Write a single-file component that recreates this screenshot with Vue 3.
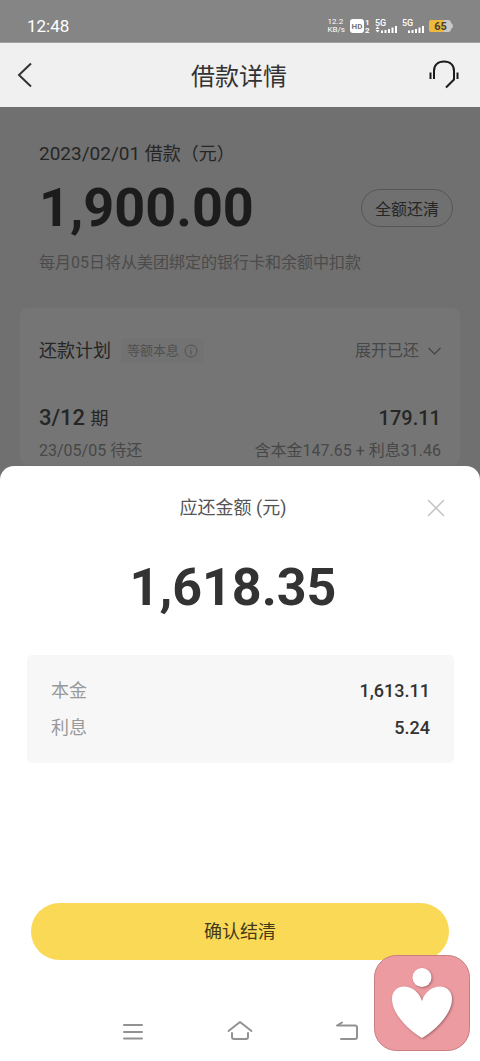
<script setup>
const details = [
  { label: '本金', value: '1,613.11' },
  { label: '利息', value: '5.24' },
]
</script>

<template>
  <div class="screen">
    <div class="status">
      <time class="clock">12:48</time>
      <div class="indicators">
        <div class="speed"><span>12.2</span><span>KB/s</span></div>
        <svg width="20" height="16" viewBox="0 0 20 16" aria-hidden="true">
          <rect x="0" y="1" width="14" height="14" rx="3" fill="#fff" />
          <text x="7" y="11" text-anchor="middle" font-size="8" font-weight="700" fill="#777">HD</text>
          <text x="15" y="7" font-size="8" font-weight="700" fill="#fff">1</text>
          <text x="15" y="15" font-size="8" font-weight="700" fill="#fff">2</text>
        </svg>
        <svg width="22" height="16" viewBox="0 0 22 16" aria-hidden="true">
          <text x="0" y="8" font-size="9" font-weight="500" fill="#fff">5G</text>
          <path d="M0.500 11 L2.500 8.500 L4.500 11Z M0.500 12 L2.500 14.500 L4.500 12Z" fill="#fff" />
          <path d="M7 15v-2.500M10.500 15v-3M14 15v-4M17.500 15v-5.500M21 15v-7" stroke="#fff" stroke-width="2" />
        </svg>
        <svg width="22" height="16" viewBox="0 0 22 16" aria-hidden="true">
          <text x="0" y="8" font-size="9" font-weight="500" fill="#fff">5G</text>
          <path d="M7 15v-2.500M10.500 15v-3M14 15v-4M17.500 15v-5.500M21 15v-7" stroke="#fff" stroke-width="2" />
        </svg>
        <svg width="25" height="14" viewBox="0 0 25 14" aria-hidden="true">
          <path d="M3 1H19Q22 1 22 4Q24 5 24 7Q24 9 22 10Q22 13 19 13H3Q0 13 0 10V4Q0 1 3 1Z" fill="#c9c9c9" />
          <path d="M3 1H15V13H3Q0 13 0 10V4Q0 1 3 1Z" fill="#eeb93c" />
          <text x="11.500" y="11" text-anchor="middle" font-size="11" font-weight="700" fill="#4b402b">65</text>
        </svg>
      </div>
    </div>

    <header class="header">
      <button class="icon-button" aria-label="返回">
        <svg width="16" height="26" viewBox="0 0 16 26"><path d="M14 1.500L2 13L14 24.500" fill="none" stroke="#333" stroke-width="2" /></svg>
      </button>
      <h1>借款详情</h1>
      <button class="icon-button" aria-label="客服">
        <svg width="30" height="30" viewBox="0 0 30 30" fill="none" stroke="#1c1c1c" stroke-width="2">
          <path d="M5 19V11C5 5 9 1.500 15 1.500S25 5 25 11V19.500L17 27.500" />
          <path d="M1.500 12.500V19M28.500 12.500V19" />
        </svg>
      </button>
    </header>

    <main class="loan">
      <section class="summary">
        <p class="date">2023/02/01 <span>借款（元）</span></p>
        <div class="amount-row">
          <strong class="amount">1,900.00</strong>
          <button class="payoff">全额还清</button>
        </div>
        <p class="note">每月05日将从美团绑定的银行卡和余额中扣款</p>
      </section>
      <section class="plan">
        <div class="plan-head">
          <h2>还款计划</h2>
          <span class="tag">等额本息
            <svg width="14" height="14" viewBox="0 0 14 14" fill="none" stroke="#505050"><circle cx="7" cy="7" r="6" /><path d="M7 6V10.500M7 3.500V4.500" /></svg>
          </span>
          <button class="expand">展开已还
            <svg width="14" height="10" viewBox="0 0 14 10" fill="none" stroke="#474747" stroke-width="1.300"><path d="M1.500 2L7.500 8L13.500 2" /></svg>
          </button>
        </div>
        <div class="term"><span>3/12 <small>期</small></span><span class="term-amount">179.11</span></div>
        <div class="term-note"><span>23/05/05 待还</span><span>含本金147.65 + 利息31.46</span></div>
      </section>
    </main>

    <section class="sheet" role="dialog" aria-labelledby="sheet-title">
      <div class="sheet-head">
        <h2 id="sheet-title">应还金额 (元)</h2>
        <button class="close" aria-label="关闭">
          <svg width="18" height="18" viewBox="0 0 18 18"><path d="M1 1L17 17M17 1L1 17" stroke="#c4c4c4" stroke-width="1.500" /></svg>
        </button>
      </div>
      <strong class="due">1,618.35</strong>
      <dl class="details">
        <div v-for="item in details" :key="item.label">
          <dt>{{ item.label }}</dt>
          <dd>{{ item.value }}</dd>
        </div>
      </dl>
      <button class="confirm">确认结清</button>
      <nav class="system-nav" aria-label="系统导航">
        <button aria-label="最近任务">
          <svg width="26" height="24" viewBox="0 0 26 24"><path d="M4 5H22M4 12H22M4 18.500H22" /></svg>
        </button>
        <button aria-label="主页">
          <svg width="26" height="24" viewBox="0 0 26 24"><path d="M1.500 11L13 2L24.500 11M5 13V17Q5 19 7 19H19Q21 19 21 17V13" /></svg>
        </button>
        <button aria-label="返回上一页">
          <svg width="26" height="24" viewBox="0 0 26 24"><path d="M8 2.500L3 5.500H21Q23 5.500 23 7.500V17Q23 19 21 19H7" /></svg>
        </button>
      </nav>
    </section>

    <svg class="badge" width="96" height="96" viewBox="0 0 96 96" role="img" aria-label="爱心">
      <rect x="0.500" y="0.500" width="95" height="95" rx="22" fill="#ec9ba0" stroke="#c77d82" />
      <g class="mark" fill="#fff">
        <circle cx="48" cy="22.500" r="9.500" />
        <path d="M48 83C37 77 18 60 18 44C18 27 42 27 48 46C54 27 78 27 78 44C78 60 59 77 48 83Z" />
      </g>
    </svg>
  </div>
</template>

<style>
body {
  margin: 0;
}
</style>

<style scoped>
.screen {
  position: relative;
  display: flex;
  flex-direction: column;
  min-height: 100vh;
  background: #707070;
  color: #262626;
  font-family: Roboto, "Noto Sans CJK SC", sans-serif;
}
h1, h2, p, dl, dd {
  margin: 0;
  font-weight: 400;
}
button {
  padding: 0;
  border: 0;
  background: none;
  color: inherit;
  font: inherit;
}
svg {
  display: block;
}
.status {
  display: flex;
  align-items: center;
  justify-content: space-between;
  height: 32px;
  padding: 10px 26px 0 27px;
  background: #858585;
  color: #fff;
}
.clock {
  font-size: 17px;
}
.indicators {
  display: flex;
  align-items: center;
  gap: 5px;
}
.speed {
  display: flex;
  flex-direction: column;
  font-size: 8px;
  line-height: 8px;
}
.header {
  display: flex;
  align-items: center;
  justify-content: space-between;
  height: 64px;
  padding: 0 21px 0 17px;
  border-top: 1px solid #a0a0a0;
  background: #f0f0f0;
}
.icon-button {
  display: flex;
  width: 30px;
}
.icon-button:last-child {
  justify-content: flex-end;
}
.header h1 {
  padding: 4px 0 0 2px;
  font-size: 24px;
  line-height: 32px;
  color: #333;
}
.loan {
  padding: 35px 20px 16px;
}
.summary {
  padding: 0 7px 0 19px;
}
.date {
  font-size: 19px;
  line-height: 24px;
}
.date span {
  font-size: 18px;
}
.amount-row {
  display: flex;
  align-items: center;
  justify-content: space-between;
  padding: 10px 0;
}
.amount, .due {
  line-height: 64px;
}
.amount {
  font-size: 54px;
  color: #1c1c1c;
}
.payoff {
  height: 38px;
  padding: 0 13px;
  border: 1px solid #555;
  border-radius: 19px;
  font-size: 16px;
}
.note {
  font-size: 16px;
  line-height: 26px;
  color: #4b4b4b;
}
.plan {
  margin-top: 32px;
  padding: 29px 19px 0;
  border-radius: 8px;
  background: #757575;
}
.plan-head {
  display: flex;
  align-items: center;
  line-height: 28px;
}
.plan-head h2 {
  font-size: 18px;
}
.tag {
  display: flex;
  align-items: center;
  gap: 5px;
  margin-left: 10px;
  padding: 0 6px;
  background: #727272;
  font-size: 13px;
  line-height: 24px;
  color: #505050;
}
.expand {
  display: flex;
  align-items: center;
  gap: 8px;
  margin-left: auto;
  font-size: 16px;
  color: #474747;
}
.term, .term-note {
  display: flex;
  justify-content: space-between;
}
.term {
  margin-top: 38px;
  font-size: 22px;
  font-weight: 500;
  line-height: 30px;
}
.term small {
  font-size: 18px;
  font-weight: 400;
}
.term-amount {
  font-size: 20px;
}
.term-note {
  margin-top: 3px;
  font-size: 16px;
  line-height: 28px;
  color: #474747;
}
.sheet {
  display: flex;
  flex: 1;
  flex-direction: column;
  margin-top: -15px;
  border-radius: 14px 14px 0 0;
  background: #fff;
  color: #333;
}
.sheet-head {
  display: grid;
  grid-template-columns: 1fr auto 1fr;
  align-items: center;
  padding: 28px 35px 0 21px;
}
.sheet-head h2 {
  grid-column: 2;
  font-size: 18px;
  line-height: 28px;
  color: #555;
}
.close {
  justify-self: end;
}
.due {
  padding: 34px 14px 0 0;
  font-size: 52px;
  text-align: center;
}
.details {
  margin: 35px 26px 20px 27px;
  padding: 17px 24px;
  border-radius: 5px;
  background: #f7f7f7;
}
.details div {
  display: flex;
  align-items: center;
  justify-content: space-between;
  font-size: 18px;
  line-height: 37px;
}
.details dt {
  color: #999;
}
.details dd {
  font-weight: 500;
}
.confirm {
  height: 57px;
  margin: auto 31px 0;
  padding-bottom: 3px;
  border-radius: 29px;
  background: #fad957;
  font-size: 18px;
  color: #44391a;
}
.system-nav {
  display: flex;
  padding: 60px 80px 17px;
}
.system-nav button {
  display: flex;
  flex: 1;
  justify-content: center;
}
.system-nav path {
  fill: none;
  stroke: #929292;
  stroke-width: 2;
  stroke-linecap: round;
  stroke-linejoin: round;
}
.badge {
  position: absolute;
  right: 10px;
  bottom: 10px;
}
.mark {
  filter: drop-shadow(1px 1px 1px #a0656a);
}
</style>
